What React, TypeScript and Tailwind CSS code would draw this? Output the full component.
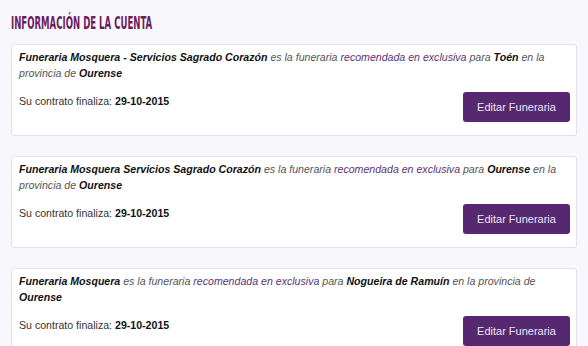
const cards = [
  {
    name: 'Funeraria Mosquera - Servicios Sagrado Corazón',
    place: 'Toén',
    province: 'Ourense',
    date: '29-10-2015',
  },
  {
    name: 'Funeraria Mosquera Servicios Sagrado Corazón',
    place: 'Ourense',
    province: 'Ourense',
    date: '29-10-2015',
  },
  {
    name: 'Funeraria Mosquera',
    place: 'Nogueira de Ramuín',
    province: 'Ourense',
    date: '29-10-2015',
  },
]

function AccountCard({ name, place, province, date }: (typeof cards)[number]) {
  return (
    <div className="bg-white border border-[#e3e2ea] rounded-[3px] pt-[4px] pl-[7px] pr-[6px] pb-[13px]">
      <p className="italic text-[#555] text-[10.6px] leading-[16px]">
        <b className="text-[#111]">{name}</b> es la funeraria{' '}
        <span className="text-[#5b3478]">recomendada en exclusiva</span> para{' '}
        <b className="text-[#111]">{place}</b> en la provincia de{' '}
        <b className="text-[#111]">{province}</b>
      </p>
      <div className="flex items-start justify-between mt-[11px]">
        <div className="text-[10.6px] leading-[16px] text-[#333] pt-[1px]">
          Su contrato finaliza: <b className="text-[#111]">{date}</b>
        </div>
        <button className="w-[107px] h-[30px] rounded-[3px] bg-[#55286f] text-[#ece4f3] text-[11px]">
          Editar Funeraria
        </button>
      </div>
    </div>
  )
}

export default function App() {
  return (
    <div className="min-h-[346px] bg-[#f8f7fc] pl-[11px] pr-[11px] pt-[13px] font-['Liberation_Sans',Arial,sans-serif]">
      <h2 className="font-['DejaVu_Sans',sans-serif] font-stretch-condensed font-bold text-[#6b1d5c] text-[17px] leading-[20px] mb-[11px] origin-left scale-x-[0.56] whitespace-nowrap">
        INFORMACIÓN DE LA CUENTA
      </h2>
      <div className="flex flex-col gap-[20px]">
        {cards.map((c, i) => (
          <AccountCard key={i} {...c} />
        ))}
      </div>
    </div>
  )
}
